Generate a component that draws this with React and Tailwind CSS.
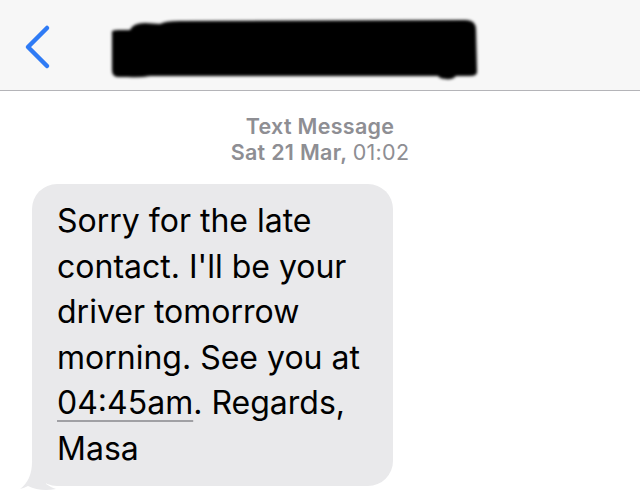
import React from "react";

export default function App() {
  return (
    <div className="w-[640px] h-[502px] bg-white overflow-hidden" style={{ fontFamily: "Inter, 'Noto Sans', sans-serif" }}>
      <header className="relative h-[91px] bg-[#f7f7f7] border-b border-[#b4b4b8] flex items-center">
        <svg width="640" height="90" viewBox="0 0 640 90" className="absolute left-0 top-0">
          <defs>
            <filter id="blur" x="-10%" y="-30%" width="120%" height="160%">
              <feGaussianBlur stdDeviation="1.8" />
            </filter>
          </defs>
          <path d="M47 28 L28 47 L47 66" fill="none" stroke="#2f7bf5" strokeWidth="4.5" strokeLinecap="round" strokeLinejoin="round" />
          <g filter="url(#blur)" fill="#000">
            <path d="M112 33 Q111 30 118 30 L130 30 Q133 23 145 23 L160 24 Q165 21 180 21 L466 20 Q476 20 476 30 L477 72 Q477 76 470 76 L456 76 Q452 80 446 79 Q440 79 438 76 L150 76 Q140 78 128 77 L118 77 Q112 77 112 70 Z" />
          </g>
        </svg>
      </header>
      <div className="flex flex-col items-center pt-[22px] text-[21.5px] leading-[26px] font-semibold text-[#8e8e93] tracking-[0.3px]">
        <div>Text Message</div>
        <div>
          Sat 21 Mar, <span className="font-normal">01:02</span>
        </div>
      </div>
      <div className="relative ml-[32px] mt-[19px] w-[361px]">
        <div className="relative z-10 rounded-[25px] bg-[#e9e9eb] pl-[25px] pr-[14px] pt-[14px] pb-[15px] text-[32px] leading-[45.5px] text-black tracking-[0px]">
          <div>Sorry for the late</div>
          <div>contact. I'll be your</div>
          <div>driver tomorrow</div>
          <div>morning. See you at</div>
          <div>
            <span className="underline decoration-[#a0a0a4] decoration-2 underline-offset-[6px]">04:45am</span>. Regards,
          </div>
          <div>Masa</div>
        </div>
        <svg width="40" height="30" viewBox="0 0 40 30" className="absolute left-[-12px] bottom-[-6px] z-0">
          <path d="M12 0 L26 0 L26 22 Q32 26 36 27 Q20 30 8 24 Q4 26 0 27 Q12 18 12 0 Z" fill="#e9e9eb" />
        </svg>
      </div>
    </div>
  );
}
